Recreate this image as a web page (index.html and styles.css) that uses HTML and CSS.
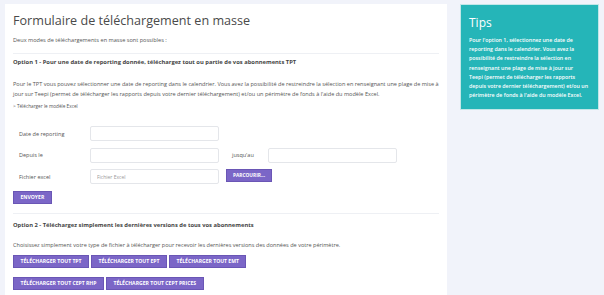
FILE: index.html
```html
<!DOCTYPE html>
<html lang="fr">
<head>
  <meta charset="UTF-8">
  <title>Formulaire de téléchargement en masse</title>
  <link rel="stylesheet" href="styles.css">
</head>
<body>
  <div class="main">
    <h1>Formulaire de téléchargement en masse</h1>
    <p class="intro">Deux modes de téléchargements en masse sont possibles :</p>
    <hr>

    <h3>Option 1 - Pour une date de reporting donnée, téléchargez tout ou partie de vos abonnements TPT</h3>
    <p class="text">Pour le TPT vous pouvez sélectionner une date de reporting dans le calendrier. Vous avez la possibilité de restreindre la sélection en renseignant une plage de mise à jour sur Teepi (permet de télécharger les rapports depuis votre dernier téléchargement) et/ou un périmètre de fonds à l'aide du modèle Excel.</p>
    <a class="link" href="#">&gt; Télécharger le modèle Excel</a>

    <form class="form">
      <div class="row">
        <label>Date de reporting</label>
        <input type="text">
      </div>
      <div class="row">
        <label>Depuis le</label>
        <input type="text">
        <label class="to">jusqu'au</label>
        <input type="text">
      </div>
      <div class="row">
        <label>Fichier excel</label>
        <input type="text" placeholder="Fichier Excel">
        <a class="button browse">Parcourir...</a>
      </div>
    </form>
    <div class="buttons send">
      <a class="button">Envoyer</a>
    </div>
    <hr class="second">

    <h3 class="option2">Option 2 - Téléchargez simplement les dernières versions de tous vos abonnements</h3>
    <p class="text choose">Choisissez simplement votre type de fichier à télécharger pour recevoir les dernières versions des données de votre périmètre.</p>
    <div class="buttons first">
      <a class="button">Télécharger tout TPT</a>
      <a class="button">Télécharger tout EPT</a>
      <a class="button">Télécharger tout EMT</a>
    </div>
    <div class="buttons">
      <a class="button">Télécharger tout CEPT RHP</a>
      <a class="button">Télécharger tout CEPT PRICES</a>
    </div>
  </div>

  <div class="side">
    <div class="tips">
      <h2>Tips</h2>
      <p>Pour l'option 1, sélectionnez une date de reporting dans le calendrier. Vous avez la possibilité de restreindre la sélection en renseignant une plage de mise à jour sur<br>Teepi (permet de télécharger les rapports depuis votre dernier téléchargement) et/ou un périmètre de fonds à l'aide du modèle Excel.</p>
    </div>
  </div>
</body>
</html>
```

FILE: styles.css
```css
body {
  font-family: "Open Sans", sans-serif;
  background-color: #f1f3fa;
  color: #555;
  margin: 0;
  padding: 4px 5px 0 5px;
  display: flex;
  height: 291px;
  overflow: hidden;
}
.main {
  background: #fff;
  width: 426px;
  padding: 0 8px;
  flex-shrink: 0;
}
h1 {
  font-size: 12.6px;
  font-weight: 400;
  color: #4a4a4a;
  margin: 8px 0 0;
  line-height: 17px;
}
.intro {
  font-size: 5.6px;
  margin: 7px 0 0;
  line-height: 8px;
}
hr {
  border: 0;
  border-top: 1px solid #eef0f4;
  margin: 9px 0 0;
}
h3 {
  font-size: 5.8px;
  font-weight: 700;
  color: #444;
  margin: 4px 0 0;
  line-height: 9px;
}
.text {
  font-size: 5.55px;
  line-height: 9.5px;
  margin: 13px 0 0;
}
.link {
  display: block;
  font-size: 4.7px;
  color: #555;
  text-decoration: none;
  margin-top: 3px;
  line-height: 9px;
}
.form {
  margin: 15px 0 0 6px;
}
.row {
  display: flex;
  align-items: center;
  height: 15px;
  margin-bottom: 6.5px;
}
.row label {
  width: 71px;
  font-size: 5.5px;
}
.row label.to {
  width: 36px;
  margin-left: 13px;
}
.row input {
  width: 129px;
  height: 15px;
  box-sizing: border-box;
  border: 1px solid #e4e6ea;
  border-radius: 2px;
  padding: 0 6px;
  font-family: inherit;
  font-size: 5px;
}
.row input::placeholder {
  color: #999;
}
.button {
  display: inline-block;
  background: #7b66c7;
  color: #fff;
  font-size: 5.1px;
  font-weight: 700;
  text-transform: uppercase;
  height: 13px;
  line-height: 11px;
  padding: 0 6.5px;
  border: 1px solid #6a56b5;
  box-sizing: border-box;
  white-space: nowrap;
}
.browse {
  margin-left: 7px;
  margin-top: -2px;
  font-size: 4.8px;
  padding: 0 6px;
}
.buttons {
  display: flex;
  gap: 2px;
  margin-top: 9px;
}
.buttons.send {
  margin-top: 0;
}
.buttons.first {
  margin-top: 5px;
}
.second {
  margin-top: 9px;
}
.option2 {
  margin-top: 7px;
}
.choose {
  margin-top: 11px;
}
.side {
  margin-left: 13px;
  width: 139px;
}
.tips {
  background: #25b5b8;
  border: 1px solid #c2e7e8;
  color: #fff;
  padding: 0 5px 8px 8px;
  height: 106px;
  box-sizing: border-box;
}
.tips h2 {
  font-size: 12px;
  font-weight: 400;
  margin: 10px 0 0;
  line-height: 16px;
}
.tips p {
  font-size: 5.3px;
  font-weight: 600;
  line-height: 9.2px;
  margin: 5px 0 0;
}
```
